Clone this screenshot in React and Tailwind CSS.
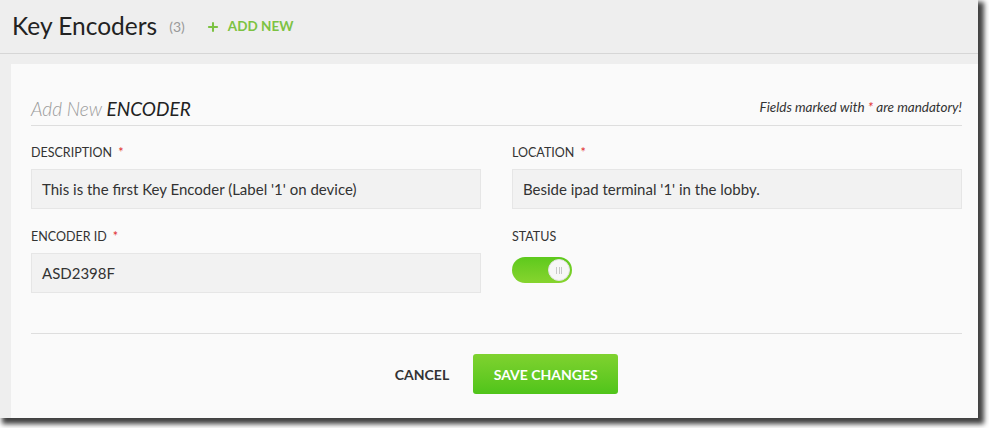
import { Plus } from "lucide-react";

function Label({ children, required }) {
  return (
    <label className="mb-[8px] block text-[12.5px] leading-4 text-[#333]">
      {children}
      {required && <span className="ml-[6px] text-[#e02b2b]">*</span>}
    </label>
  );
}

function Field({ label, value, required }) {
  return (
    <div>
      <Label required={required}>{label}</Label>
      <div className="flex h-10 items-center border border-[#e6e6e6] bg-[#f2f2f2] px-[10px] text-[15px] text-[#333]">
        {value}
      </div>
    </div>
  );
}

function Toggle() {
  return (
    <div className="mt-[12px] flex h-[26px] w-[60px] items-center justify-end rounded-full bg-gradient-to-b from-[#5dc91c] to-[#86d42e] pr-[2px]">
      <div className="flex h-[22px] w-[22px] items-center justify-center gap-[1.5px] rounded-full border border-[#e2e2e2] bg-[#f7f7f7]">
        <span className="h-[7px] w-px bg-[#c8c8c8]" />
        <span className="h-[7px] w-px bg-[#c8c8c8]" />
        <span className="h-[7px] w-px bg-[#c8c8c8]" />
      </div>
    </div>
  );
}

export default function App() {
  return (
    <div className="h-[428px] w-[989px] bg-white" style={{ fontFamily: "Lato, 'Noto Sans', sans-serif" }}>
      <div className="flex h-[418px] w-[978px] flex-col bg-[#eeeeee] shadow-[4px_4px_5px_2px_rgba(0,0,0,0.75)]">
        <div className="flex h-[54px] items-center border-b border-[#d6d6d6] pl-3">
          <h1 className="text-[24.5px] leading-none text-[#222]">Key Encoders</h1>
          <span className="ml-[12px] text-[14px] text-[#999]">(3)</span>
          <button className="ml-[21px] flex items-center gap-[8px] text-[13.5px] font-bold text-[#7cc242]">
            <Plus size={14} strokeWidth={3.5} />
            ADD NEW
          </button>
        </div>
        <div className="ml-[11px] mt-[10px] flex flex-1 flex-col bg-[#fafafa] pl-5 pr-4 pt-[33px]">
          <div className="flex items-end justify-between border-b border-[#dedede] pb-[4px]">
            <h2 className="text-[19px] italic leading-6">
              <span className="font-light text-[#999]">Add New</span>{" "}
              <span className="font-normal text-[#222]">ENCODER</span>
            </h2>
            <p className="pb-[4px] text-[13.5px] italic text-[#333]">
              Fields marked with <span className="text-[#e02b2b]">*</span> are mandatory!
            </p>
          </div>
          <div className="mt-[19px] grid grid-cols-2 gap-x-[31px] gap-y-[20px]">
            <Field label="DESCRIPTION" required value="This is the first Key Encoder (Label '1' on device)" />
            <Field label="LOCATION" required value="Beside ipad terminal '1' in the lobby." />
            <Field label="ENCODER ID" required value="ASD2398F" />
            <div>
              <Label>STATUS</Label>
              <Toggle />
            </div>
          </div>
          <div className="mt-10 border-t border-[#dedede]" />
          <div className="mt-5 flex items-center justify-center gap-6 pl-5">
            <button className="text-[14px] font-bold text-[#333]">CANCEL</button>
            <button className="h-10 w-[145px] rounded-[3px] bg-gradient-to-b from-[#7fd22f] to-[#4fc41a] text-[14px] font-bold text-white">
              SAVE CHANGES
            </button>
          </div>
        </div>
      </div>
    </div>
  );
}
